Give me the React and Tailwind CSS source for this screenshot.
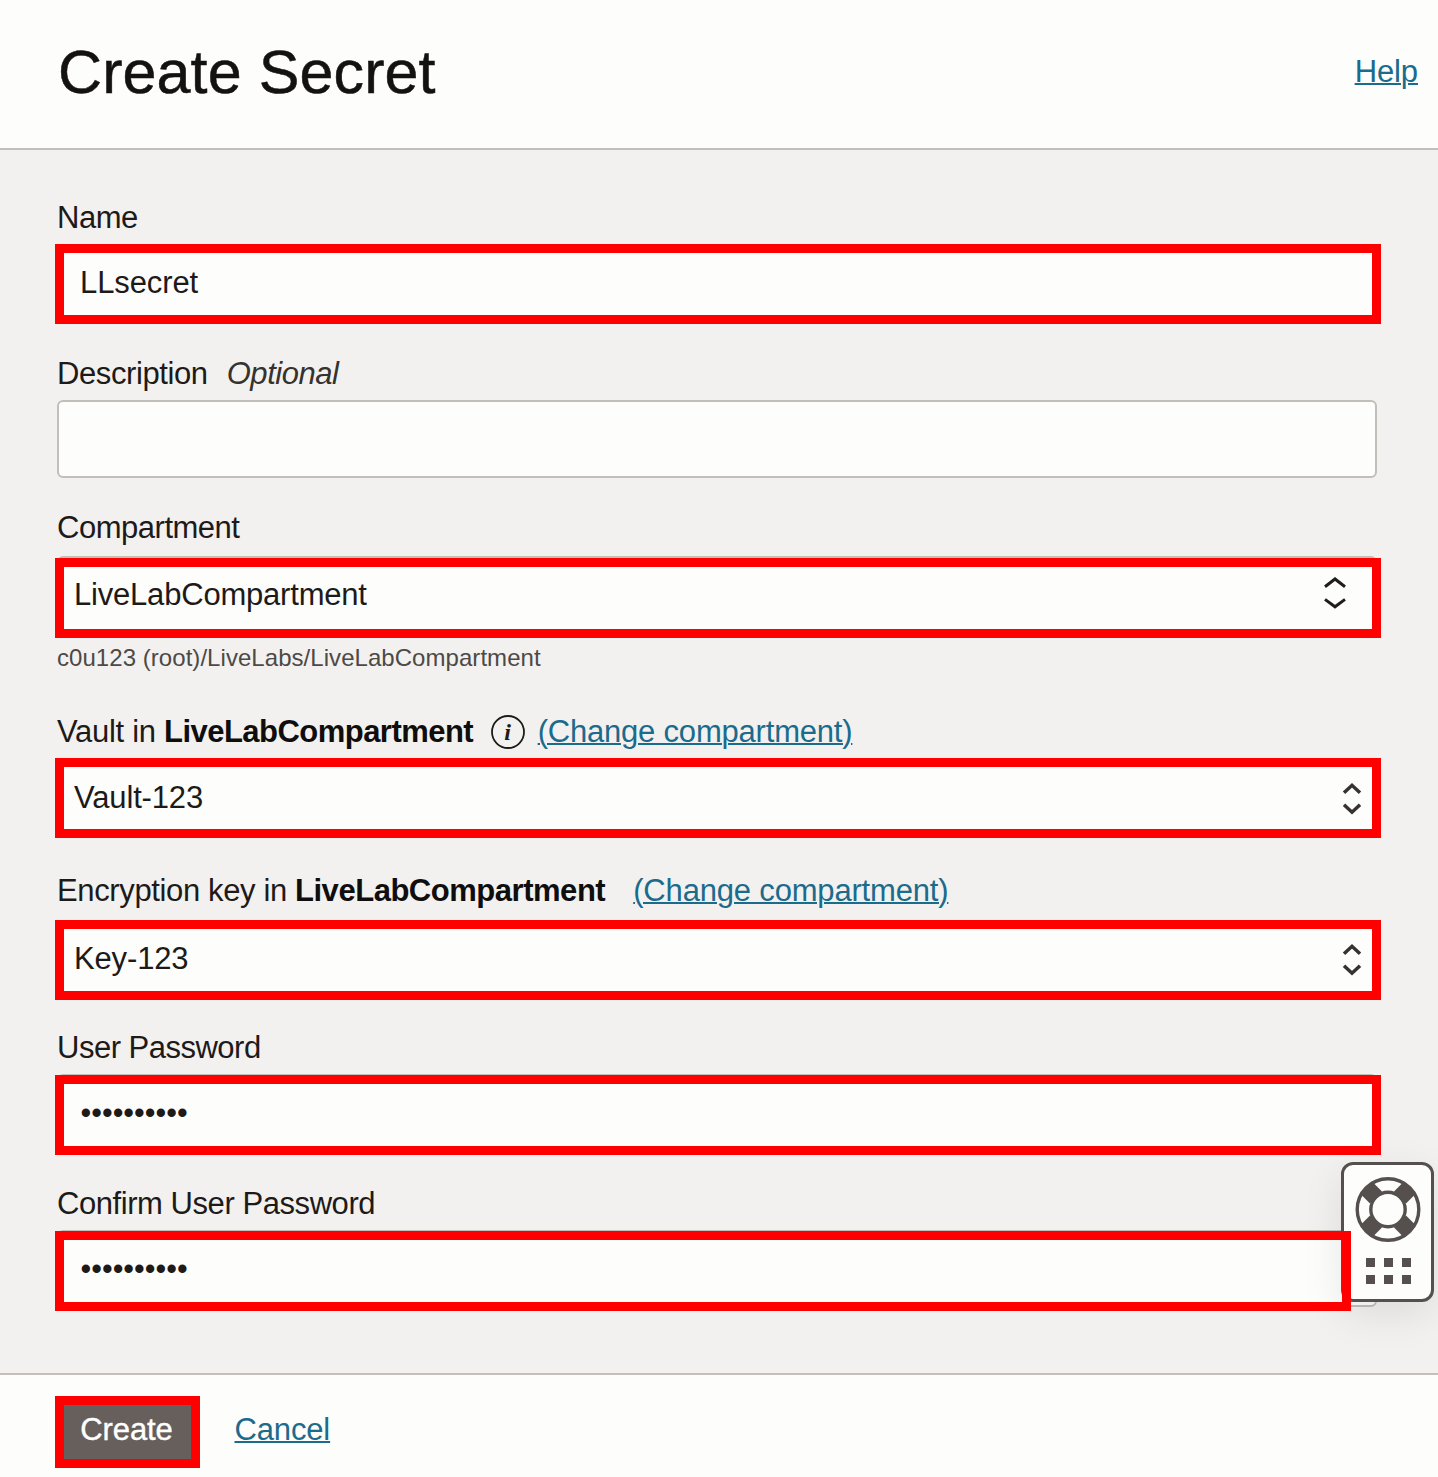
function Chevrons({ small, className }) {
  return (
    <svg className={className} width="24" height="36" viewBox="-12 -18 24 36" fill="none" stroke="#1f1c1a">
      {small ? (
        <path d="M-8 -6.3 L0 -13.7 L8 -6.3 M-8 5.8 L0 13.2 L8 5.8" strokeWidth="3.5" stroke="#35322f" />
      ) : (
        <path d="M-10 -6.2 L0 -14 L10 -6.2 M-10 6.4 L0 13.8 L10 6.4" strokeWidth="3" />
      )}
    </svg>
  );
}

function Row({ className, children }) {
  return <div className={`flex items-start whitespace-pre leading-[36px] ${className}`}>{children}</div>;
}

function Field({ className = "h-[78px]", highlight, children }) {
  return (
    <div className={`relative w-[1320px] rounded-[6px] border-2 border-[#c2beba] bg-[#fdfdfc] ${className}`}>
      <div className={`absolute flex items-start justify-between whitespace-pre border-[9px] border-[#ff0000] leading-[36px] ${highlight}`}>
        {children}
      </div>
    </div>
  );
}

function HelpWidget() {
  return (
    <div className="absolute top-[1162px] left-[1341px] flex h-[140px] w-[93px] flex-col items-center rounded-[12px] border-[3px] border-[#55504d] bg-[#fdfdfc] pt-[11px] shadow-[0_12px_40px_rgba(0,0,0,0.09)]">
      <svg width="66" height="66" viewBox="-33 -33.5 66 66" fill="none" stroke="#55504d">
        <path d="M-22 -22 L-12 -12 M22 -22 L12 -12 M-22 22 L-12 12 M22 22 L12 12" strokeWidth="17" />
        <circle r="30.8" strokeWidth="3.4" />
        <circle r="17.2" strokeWidth="3.4" fill="#fdfdfc" />
      </svg>
      <div className="mt-[16px] ml-[2px] grid grid-cols-3 gap-x-[9px] gap-y-[8px]">
        {[0, 1, 2, 3, 4, 5].map((n) => (
          <span key={n} className="size-[9px] bg-[#55504d]" />
        ))}
      </div>
    </div>
  );
}

const link = "text-[#1b6b8c] underline decoration-2 underline-offset-[1px]";

export default function App() {
  return (
    <div className="relative h-[1477px] w-[1438px] overflow-hidden bg-[#f3f1f0] font-['Liberation_Sans',Arial,sans-serif] text-[31px] text-[#1d1a18]">
      <header className="flex h-[150px] items-start justify-between border-b-2 border-[#c2beba] bg-[#fdfdfc] pr-[20px] pl-[58px]">
        <h1 className="pt-[37px] text-[61px] leading-[70px] tracking-[0.1px] text-[#141211] [-webkit-text-stroke:0.5px_#141211]">Create Secret</h1>
        <a className={`pt-[54px] leading-[36px] tracking-[-0.1px] ${link}`}>Help</a>
      </header>

      <main className="pl-[57px]">
        <Row className="h-[96px] pt-[50px] tracking-[-0.5px]">Name</Row>
        <Field highlight="top-[-4px] left-[-4px] h-[80px] w-[1326px] pt-[12px] pl-[16px]">
          <span className="tracking-[-0.1px]">LLsecret</span>
        </Field>

        <Row className="h-[76px] pt-[32px]">
          <span className="tracking-[-0.4px]">Description</span>
          <em className="ml-[19px] tracking-[-0.45px] text-[#35322f]">Optional</em>
        </Row>
        <div className="h-[78px] w-[1320px] rounded-[6px] border-2 border-[#c2beba] bg-[#fdfdfc]" />

        <Row className="h-[78px] pt-[32px] tracking-[-0.48px]">Compartment</Row>
        <Field highlight="top-0 left-[-4px] h-[80px] w-[1326px] pt-[10px] pl-[10px]">
          <span className="tracking-[-0.2px]">LiveLabCompartment</span>
          <Chevrons className="mr-[25px] -mt-[2px]" />
        </Field>
        <p className="h-[79px] pt-[9px] text-[24px] leading-[30px] tracking-[0.05px] whitespace-pre text-[#4d4946]">c0u123 (root)/LiveLabs/LiveLabCompartment</p>

        <Row className="h-[47px] pt-[1px]">
          <span className="tracking-[-0.3px]">Vault in </span>
          <b className="tracking-[-0.53px] text-[#100e0d]">LiveLabCompartment</b>
          <svg className="-mt-[1px] ml-[16.5px]" width="36" height="38" viewBox="-18 -19 36 38">
            <circle r="16" fill="none" stroke="#1d1a18" strokeWidth="1.8" />
            <text x="-0.5" y="8" textAnchor="middle" fontFamily="Liberation Serif" fontStyle="italic" fontWeight="bold" fontSize="24" fill="#1d1a18">i</text>
          </svg>
          <a className={`ml-[12px] tracking-[-0.2px] ${link}`}>(Change compartment)</a>
        </Row>
        <Field highlight="top-[-4px] left-[-4px] h-[80px] w-[1326px] pt-[13px] pl-[10px]">
          <span className="tracking-[-0.15px]">Vault-123</span>
          <Chevrons small className="mr-[8.5px] mt-[1px]" />
        </Field>

        <Row className="h-[84px] pt-[35px]">
          <span className="tracking-[-0.37px]">Encryption key in </span>
          <b className="tracking-[-0.47px] text-[#100e0d]">LiveLabCompartment</b>
          <a className={`ml-[28px] tracking-[-0.18px] ${link}`}>(Change compartment)</a>
        </Row>
        <Field highlight="top-[-4px] left-[-4px] h-[80px] w-[1326px] pt-[12px] pl-[10px]">
          <span className="tracking-[-0.15px]">Key-123</span>
          <Chevrons small className="mr-[8.5px] mt-[1px]" />
        </Field>

        <Row className="h-[74px] pt-[30px] tracking-[-0.5px]">User Password</Row>
        <Field highlight="top-[-1px] left-[-4px] h-[80px] w-[1326px] pt-[10px] pl-[16.5px]">
          <span className="text-[30.6px]">••••••••••</span>
        </Field>

        <Row className="h-[78px] pt-[34px] tracking-[-0.44px]">Confirm User Password</Row>
        <Field className="h-[77px]" highlight="z-10 top-[-1px] left-[-4px] h-[80px] w-[1296px] pt-[10px] pl-[16.5px]">
          <span className="text-[30.6px]">••••••••••</span>
        </Field>
      </main>

      <footer className="mt-[66px] flex h-[104px] items-start border-t-2 border-[#c5bfbc] bg-[#fdfdfc] pt-[21px] pl-[55px] leading-[36px]">
        <button className="flex h-[72px] w-[145px] items-start justify-center border-[9px] border-[#ff0000] bg-[#665f5b] pt-[7px] pr-[2px] tracking-[-0.1px] text-white [-webkit-text-stroke:0.4px_white]">Create</button>
        <a className={`ml-[34.5px] pt-[16px] tracking-[-0.15px] ${link}`}>Cancel</a>
      </footer>

      <HelpWidget />
    </div>
  );
}
